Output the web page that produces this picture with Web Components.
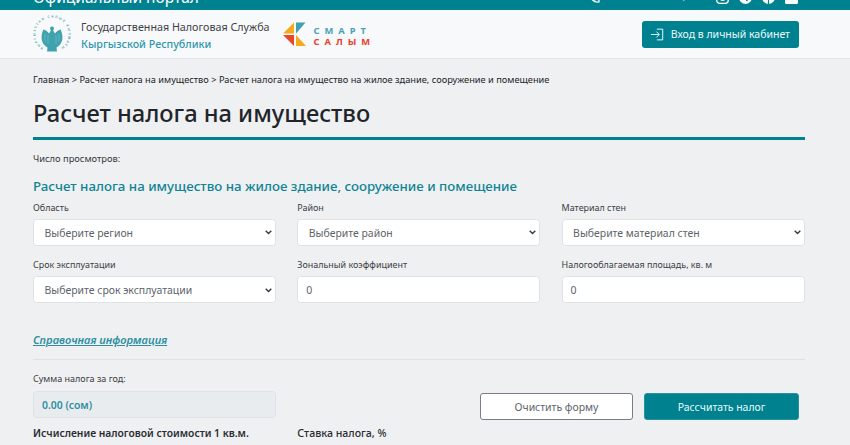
<!DOCTYPE html>
<html lang="ru"><head><meta charset="utf-8"><title>Расчет налога</title>
<style>
html,body{margin:0;padding:0;background:#eff0f2;height:445px;overflow:hidden;font-family:"Noto Sans","Open Sans",sans-serif;color:#212529}
</style></head><body>
<tax-topbar></tax-topbar>
<tax-header></tax-header>
<tax-page></tax-page>
<script>
const sh=(el,html)=>{el.attachShadow({mode:'open'}).innerHTML=html};
class TaxTopbar extends HTMLElement{connectedCallback(){sh(this,`<style>
:host{display:flex;height:10px;background:#00818f;overflow:hidden;justify-content:space-between;padding:0 52px 0 33px;color:#fff;box-sizing:border-box}
.t{font-size:15.5px;line-height:20px;margin-top:-13px;white-space:nowrap}
.r{display:flex;align-items:flex-start;height:10px}
.ph{font-size:9.5px;line-height:12px;margin:-9px 12px 0 5px;white-space:nowrap}
.ph b{color:#f0b429;font-weight:600}
svg{display:block;flex:none}
</style><div class="t">Официальный портал</div><div class="r">
<svg width="12" height="12" viewBox="0 0 12 12" style="margin-top:-8px"><path d="M2 1h2l1 3-1 1c.6 1.400 1.600 2.400 3 3l1-1 3 1v2C6 11 1 6 2 1z" fill="none" stroke="#fff" stroke-width="1.200"/></svg>
<div class="ph">+996 312 423 456, <b>115</b></div>
<svg width="13" height="13" viewBox="0 0 13 13" style="margin-top:-9px;margin-right:10px"><rect x=".7" y=".7" width="11.600" height="11.600" rx="3" fill="none" stroke="#fff" stroke-width="1.300"/><circle cx="6.500" cy="6.500" r="2.800" fill="none" stroke="#fff" stroke-width="1.200"/></svg>
<svg width="13" height="13" viewBox="0 0 13 13" style="margin-top:-9px;margin-right:10px"><circle cx="6.500" cy="6.500" r="6.500" fill="#fff"/><path d="M3 7l7-3-2 6-2-2" fill="none" stroke="#00818f" stroke-width="1"/></svg>
<svg width="13" height="13" viewBox="0 0 13 13" style="margin-top:-9px;margin-right:10px"><circle cx="6.500" cy="6.500" r="6.500" fill="#fff"/><path d="M6.500 13V6.500M9 3H8C7 3 6.500 3.500 6.500 4.200V6.500M5 6.500h3.500" fill="none" stroke="#00818f" stroke-width="1.200"/></svg>
<svg width="13" height="13" viewBox="0 0 13 13" style="margin-top:-9px"><rect width="13" height="13" rx="1.500" fill="#fff"/></svg>
</div>`)}}
class TaxLogo extends HTMLElement{connectedCallback(){sh(this,`<style>:host{display:block;width:38px;height:38px}svg{display:block}text{font-family:"Noto Sans",sans-serif}</style>
<svg width="38" height="38" viewBox="0 0 38 38"><defs><path id="c" d="M10.300 33A16.500 16.500 0 1 1 27.700 33"/></defs>
<text font-size="3.300" fill="#4f9fae" font-weight="600"><textPath href="#c" textLength="84">КЫРГЫЗСТАН САЛЫК КЫЗМАТЫ</textPath></text>
<path d="M19 11.500C20.500 11.500 21.300 12.800 20.800 14L20.300 15.800 22 18.500C23.500 16.500 25.500 15 27.500 14.500 29 17 29.800 21 29.300 24.500 28.800 28 26.500 31 23.500 32.500L24 36.500H14L14.500 32.500C11.500 31 9.200 28 8.700 24.500 8.200 21 9 17 10.500 14.500 12.500 15 14.500 16.500 16 18.500L17.700 15.800 17.200 14C16.700 12.800 17.500 11.500 19 11.500Z" fill="#3fa3ae"/>
<path d="M12 18.500v8M15 20v9M23 20v9M26 18.500v8" stroke="#8cc6cd" stroke-width=".5"/></svg>`)}}
class SalymLogo extends HTMLElement{connectedCallback(){sh(this,`<style>:host{display:flex;align-items:center;gap:8px}
.w{font-family:"Noto Sans",sans-serif;font-weight:700;font-size:9.300px;line-height:11px;letter-spacing:5px;white-space:nowrap;padding-top:4px}
.a{color:#4ba3b5}.b{color:#e8412a}svg{display:block}</style>
<svg width="24" height="25" viewBox="0 0 24 25"><path d="M1 11.500L12 .5V11.500z" fill="#f5a91d"/><path d="M14 .5H23.500L14 11.500z" fill="#41a0ae"/><path d="M1 13H12V24z" fill="#e8472c"/><path d="M14 13L24 24H14z" fill="#f5a91d"/></svg>
<div class="w"><div class="a">СМАРТ</div><div class="b">САЛЫМ</div></div>`)}}
class TaxHeader extends HTMLElement{connectedCallback(){sh(this,`<style>
:host{display:flex;height:49px;box-sizing:border-box;background:#f8f9fb;border-bottom:1px solid #e4e5e8;align-items:center;padding:0 51px 0 33px}
.brand{display:flex;flex-direction:column;margin-left:10px;padding-top:3px;font-size:10.730px;line-height:17px;white-space:nowrap;color:#3d4145}
.brand span{color:#2f97ad;font-weight:500}
salym-logo{margin-left:12px}
a{margin-left:auto;display:flex;align-items:center;box-sizing:border-box;width:157px;gap:7px;height:27px;padding:0 9px;background:#00818f;border-radius:3px;color:#e9fbfc;font-size:10.500px;white-space:nowrap}
svg{display:block}
</style><tax-logo></tax-logo><div class="brand">Государственная Налоговая Служба<span>Кыргызской Республики</span></div><salym-logo></salym-logo>
<a><svg width="13" height="13" viewBox="0 0 13 13" fill="none" stroke="#e9fbfc" stroke-width="1"><path d="M0 6.500h8M5.500 3.500l3 3-3 3M6 1h6v11H6"/></svg>Вход в личный кабинет</a>`)}}
class TaxField extends HTMLElement{connectedCallback(){
const l=this.getAttribute('label'),v=this.getAttribute('value'),s=this.hasAttribute('select');
sh(this,`<style>
:host{display:block}
label{display:block;font-size:8.950px;line-height:13px;height:13px;margin-bottom:5px;color:#3c4045;white-space:nowrap}
.c{display:flex;align-items:center;justify-content:space-between;box-sizing:border-box;height:27px;background:#fff;border:1px solid #dee2e6;border-radius:3.500px;font-size:10.450px;color:#5c636a;padding:1px ${s?'3px 0 10.500px':'8px 0'};white-space:nowrap}
</style><label>${l}</label><div class="c"><span>${v}</span>${s?`<svg width="7" height="5" viewBox="0 0 7 5" fill="none" stroke="#343a40" stroke-width="1.400"><path d="M.7.8l2.800 2.800L6.300.8"/></svg>`:''}</div>`)}}
class TaxBtn extends HTMLElement{connectedCallback(){sh(this,`<style>
:host{display:flex;align-items:center;justify-content:center;box-sizing:border-box;height:27px;border-radius:3px;font-size:10.450px;white-space:nowrap;width:153px;background:#fff;border:1px solid #7e7a88;color:#5c636a}
:host([primary]){width:155px;background:#00818f;border-color:#2a929e;color:#e9fbfc}
</style><slot></slot>`)}}
class TaxPage extends HTMLElement{connectedCallback(){sh(this,`<style>
:host{display:block;padding:0 45px 0 33px;color:#212529}
.crumbs{font-size:9.250px;line-height:13px;padding-top:14px;white-space:nowrap}
h1{font-size:23.660px;font-weight:500;line-height:32px;margin:11px 0 8px;color:#212529}
.rule{height:2.500px;background:#00818f}
.views{font-size:9.300px;line-height:12px;margin-top:13px;color:#33373b}
h2{font-size:13.290px;font-weight:500;line-height:18px;margin:12px 0 0;color:#0f8494}
.grid{display:grid;grid-template-columns:243px 243px 243px;column-gap:21.300px;row-gap:12.500px;margin-top:6px}
.link{margin-top:29px;font-size:11.150px;line-height:15px;font-weight:600;font-style:italic;text-decoration:underline;color:#2d8f9f}
hr{border:0;height:1px;background:#dfe1e4;margin:12px 0 0}
.bot{display:grid;grid-template-columns:243px 1fr;column-gap:204px;margin-top:12px}
.lab{font-size:9px;line-height:13px;margin-bottom:6px;color:#3c4045}
.sum{box-sizing:border-box;height:27px;display:flex;align-items:center;padding-left:8px;background:#e9ecef;border:1px solid #dee2e6;border-radius:3.500px;color:#2d8f9f;font-weight:600;font-size:10.400px}
.btns{display:flex;gap:11px;align-self:end;margin-bottom:-2px}
.last{display:grid;grid-template-columns:243px auto;column-gap:21.300px;margin-top:7px;font-size:10.300px;font-weight:600;line-height:16px;color:#2a2e32;white-space:nowrap}
.last span+span{font-weight:500;font-size:10.600px}
</style>
<div class="crumbs">Главная &gt; Расчет налога на имущество &gt; Расчет налога на имущество на жилое здание, сооружение и помещение</div>
<h1>Расчет налога на имущество</h1><div class="rule"></div>
<div class="views">Число просмотров:</div>
<h2>Расчет налога на имущество на жилое здание, сооружение и помещение</h2>
<div class="grid">
<tax-field select label="Область" value="Выберите регион"></tax-field>
<tax-field select label="Район" value="Выберите район"></tax-field>
<tax-field select label="Материал стен" value="Выберите материал стен"></tax-field>
<tax-field select label="Срок эксплуатации" value="Выберите срок эксплуатации"></tax-field>
<tax-field label="Зональный коэффициент" value="0"></tax-field>
<tax-field label="Налогооблагаемая площадь, кв. м" value="0"></tax-field>
</div>
<div class="link">Справочная информация</div>
<hr>
<div class="bot"><div><div class="lab">Сумма налога за год:</div><div class="sum">0.00 (сом)</div></div>
<div class="btns"><tax-btn>Очистить форму</tax-btn><tax-btn primary>Рассчитать налог</tax-btn></div></div>
<div class="last"><span>Исчисление налоговой стоимости 1 кв.м.</span><span>Ставка налога, %</span></div>
`)}}
customElements.define('tax-topbar',TaxTopbar);customElements.define('tax-logo',TaxLogo);customElements.define('salym-logo',SalymLogo);customElements.define('tax-header',TaxHeader);customElements.define('tax-field',TaxField);customElements.define('tax-btn',TaxBtn);customElements.define('tax-page',TaxPage);
</script></body></html>
